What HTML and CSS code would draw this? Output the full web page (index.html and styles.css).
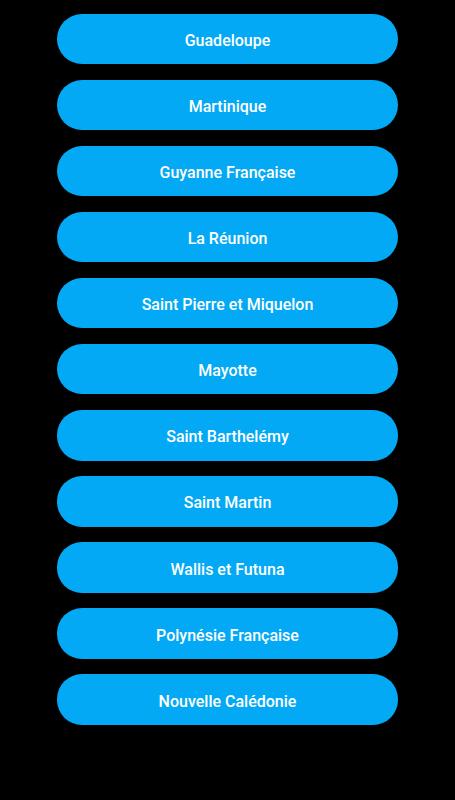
FILE: index.html
```html
<!DOCTYPE html>
<html lang="fr">
<head>
<meta charset="utf-8">
<link rel="stylesheet" href="styles.css">
</head>
<body>
<main class="list">
  <button class="btn">Guadeloupe</button>
  <button class="btn">Martinique</button>
  <button class="btn">Guyanne Française</button>
  <button class="btn">La Réunion</button>
  <button class="btn">Saint Pierre et Miquelon</button>
  <button class="btn">Mayotte</button>
  <button class="btn">Saint Barthelémy</button>
  <button class="btn">Saint Martin</button>
  <button class="btn">Wallis et Futuna</button>
  <button class="btn">Polynésie Française</button>
  <button class="btn">Nouvelle Calédonie</button>
</main>
</body>
</html>
```
FILE: styles.css
```css
html, body {
  margin: 0;
  padding: 0;
  background: #000;
  height: 100%;
}
.list {
  display: flex;
  flex-direction: column;
  align-items: center;
  gap: 15.6px;
  padding-top: 13.5px;
}
.btn {
  width: 341px;
  height: 50.5px;
  border: none;
  border-radius: 25px;
  background: #03a9f4;
  color: #fff;
  font-family: Roboto, "Noto Sans", sans-serif;
  font-weight: 500;
  font-size: 16px;
  padding: 3px 0 0;
  margin: 0;
}
```
